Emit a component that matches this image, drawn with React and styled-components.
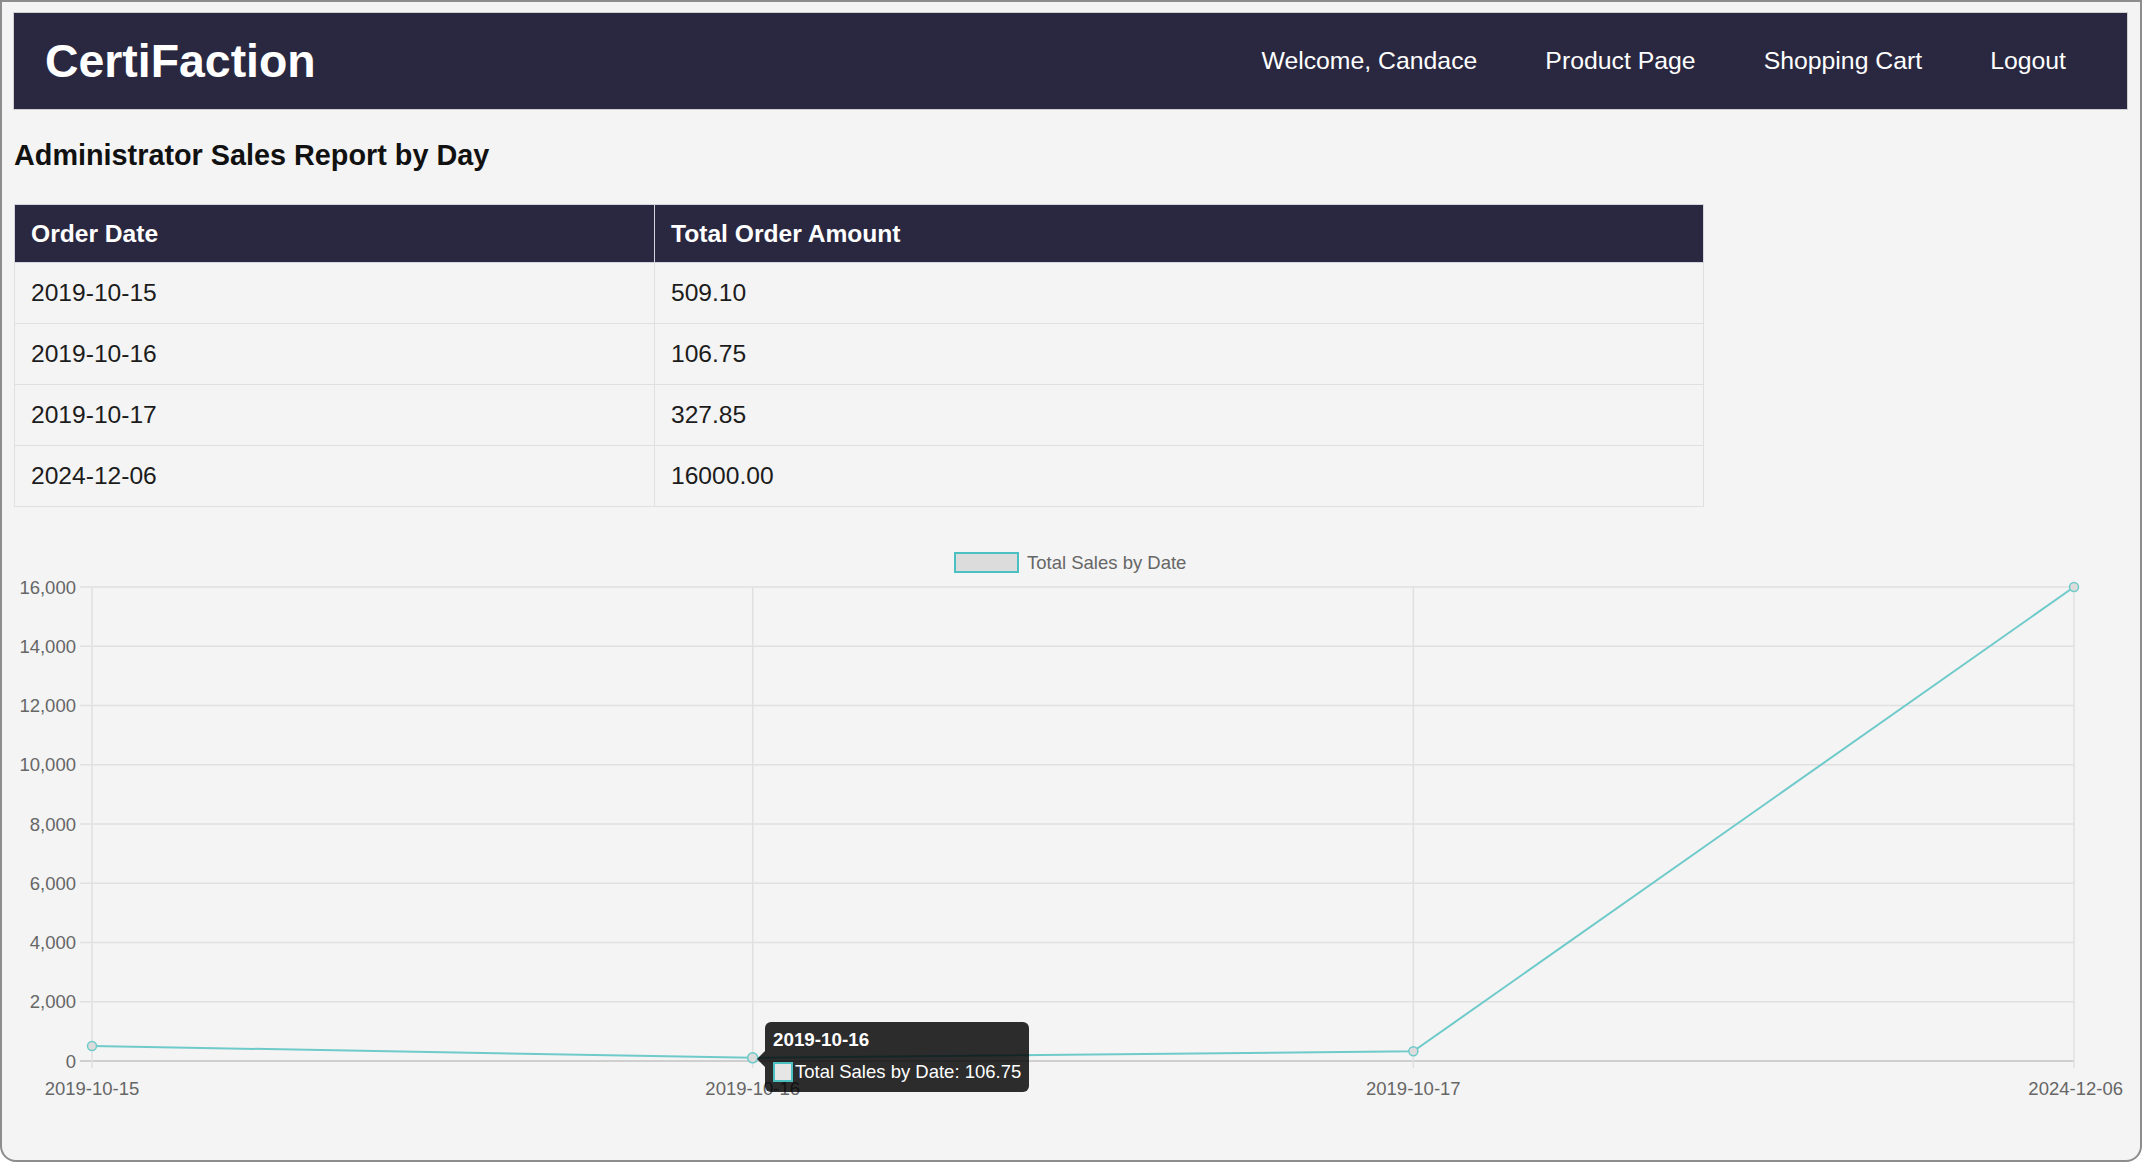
import React from "react";
import styled, { createGlobalStyle } from "styled-components";

const GlobalStyle = createGlobalStyle`
  html, body { margin: 0; padding: 0; background: #ffffff; }
  body { font-family: "Liberation Sans", Arial, Helvetica, sans-serif; }
  * { box-sizing: border-box; }
`;

const Frame = styled.div`
  width: 2142px;
  height: 1162px;
  border: 2px solid #8d8d8d;
  border-radius: 0 0 16px 16px;
  background: #f4f4f4;
  padding: 11px 13px 0 12px;
  overflow: hidden;
`;

const NavBar = styled.header`
  height: 96px;
  background: #2a2840;
  box-shadow: 0 0 0 1px rgba(0, 0, 0, 0.15);
  display: flex;
  align-items: center;
  justify-content: space-between;
  padding: 0 61px 0 31px;
`;

const Logo = styled.div`
  color: #ffffff;
  font-size: 46.4px;
  font-weight: 700;
  line-height: 1;
`;

const NavLinks = styled.nav`
  display: flex;
  align-items: center;
  gap: 68px;
`;

const NavLink = styled.a`
  color: #ffffff;
  font-size: 24.8px;
  text-decoration: none;
  line-height: 1;
`;

const Heading = styled.h3`
  margin: 29px 0 32px 0;
  font-size: 28.8px;
  line-height: 34px;
  font-weight: 700;
  color: #111111;
`;

const Table = styled.table`
  width: 1690px;
  border-collapse: collapse;
  font-size: 24.6px;
`;

const HeadCell = styled.th`
  background: #2a2840;
  color: #ffffff;
  font-weight: 700;
  text-align: left;
  height: 58px;
  padding: 0 16px;
  border: 1px solid #d4d4dc;
  width: ${(p) => (p.$w ? `${p.$w}px` : "auto")};
`;

const Cell = styled.td`
  color: #1c1c1c;
  height: 61px;
  padding: 0 16px;
  border: 1px solid #e0e0e0;
`;

const ChartWrap = styled.div`
  position: relative;
  margin-top: 23px;
  width: 2113px;
  height: 580px;
`;

const Tooltip = styled.div`
  position: absolute;
  left: 751px;
  top: 492px;
  width: 264px;
  height: 70px;
  background: rgba(0, 0, 0, 0.82);
  border-radius: 6px;
  padding: 8px 9px 0 8px;
  color: #ffffff;
  font-size: 18.5px;
  display: flex;
  flex-direction: column;
  gap: 12px;

  &::before {
    content: "";
    position: absolute;
    left: -8px;
    top: 29px;
    border-top: 8px solid transparent;
    border-bottom: 8px solid transparent;
    border-right: 8px solid rgba(0, 0, 0, 0.82);
  }
`;

const TipTitle = styled.div`
  font-weight: 700;
  font-size: 18.8px;
  line-height: 20px;
`;

const TipRow = styled.div`
  display: flex;
  align-items: center;
  gap: 2px;
  line-height: 20px;
  white-space: nowrap;
`;

const Swatch = styled.span`
  width: 20px;
  height: 20px;
  background: #e6e6e6;
  border: 2px solid #4bc0c0;
  flex: none;
`;

const dates = ["2019-10-15", "2019-10-16", "2019-10-17", "2024-12-06"];
const amounts = [509.1, 106.75, 327.85, 16000];

const X0 = 78;
const X1 = 2060;
const YTOP = 57;
const YBOT = 531;
const xs = dates.map((_, i) => X0 + ((X1 - X0) / 3) * i);
const ys = amounts.map((v) => YBOT - (v / 16000) * (YBOT - YTOP));
const ticks = [16000, 14000, 12000, 10000, 8000, 6000, 4000, 2000, 0];

function Chart() {
  const tickFont = {
    fontFamily: '"Liberation Sans", Arial, sans-serif',
    fontSize: "18.5px",
    fill: "#666666",
  };
  return (
    <svg width="2113" height="580" viewBox="0 0 2113 580">
      <rect x="941" y="23" width="63" height="19" fill="#dcdcdc" stroke="#4bc0c0" strokeWidth="2" />
      <text x="1013" y="39" style={{ ...tickFont, fontSize: "18.5px" }}>Total Sales by Date</text>

      {ticks.map((t, i) => {
        const y = YTOP + ((YBOT - YTOP) / 8) * i;
        return (
          <g key={t}>
            <line x1="66" x2={X1} y1={y} y2={y} stroke={t === 0 ? "#cfcfcf" : "#e0e0e0"} strokeWidth={t === 0 ? 2 : 1.5} />
            <text x="62" y={y + 6.5} textAnchor="end" style={tickFont}>
              {t.toLocaleString("en-US")}
            </text>
          </g>
        );
      })}

      {xs.map((x, i) => (
        <g key={dates[i]}>
          <line x1={x} x2={x} y1={YTOP} y2="538" stroke="#e0e0e0" strokeWidth="1.5" />
          <text
            x={i === 3 ? 2109 : x}
            y="565"
            textAnchor={i === 3 ? "end" : "middle"}
            style={tickFont}
          >
            {dates[i]}
          </text>
        </g>
      ))}

      <polyline
        points={xs.map((x, i) => `${x},${ys[i]}`).join(" ")}
        fill="none"
        stroke="#6fcaca"
        strokeWidth="2"
      />
      {xs.map((x, i) => (
        <circle key={i} cx={x} cy={ys[i]} r={i === 1 ? 5 : 4.5} fill="#dcdcdc" stroke="#6fcaca" strokeWidth="1.5" />
      ))}
    </svg>
  );
}

export default function App() {
  return (
    <>
      <GlobalStyle />
      <Frame>
        <NavBar>
          <Logo>CertiFaction</Logo>
          <NavLinks>
            <NavLink href="#">Welcome, Candace</NavLink>
            <NavLink href="#">Product Page</NavLink>
            <NavLink href="#">Shopping Cart</NavLink>
            <NavLink href="#">Logout</NavLink>
          </NavLinks>
        </NavBar>
        <Heading>Administrator Sales Report by Day</Heading>
        <Table>
          <thead>
            <tr>
              <HeadCell $w={640}>Order Date</HeadCell>
              <HeadCell>Total Order Amount</HeadCell>
            </tr>
          </thead>
          <tbody>
            {dates.map((d, i) => (
              <tr key={d}>
                <Cell>{d}</Cell>
                <Cell>{amounts[i].toFixed(2)}</Cell>
              </tr>
            ))}
          </tbody>
        </Table>
        <ChartWrap>
          <Chart />
          <Tooltip>
            <TipTitle>2019-10-16</TipTitle>
            <TipRow>
              <Swatch />
              <span>Total Sales by Date: 106.75</span>
            </TipRow>
          </Tooltip>
        </ChartWrap>
      </Frame>
    </>
  );
}
